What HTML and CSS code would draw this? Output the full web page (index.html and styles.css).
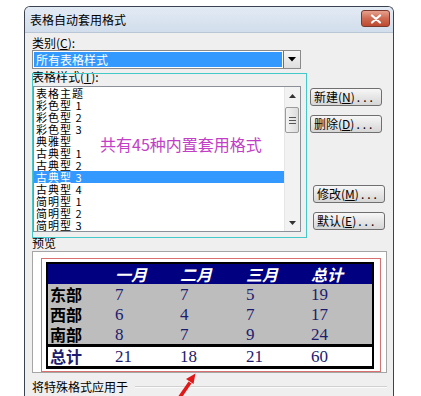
FILE: index.html
```html
<!DOCTYPE html>
<html lang="zh">
<head>
<meta charset="utf-8">
<title>表格自动套用格式</title>
<link rel="stylesheet" href="styles.css">
</head>
<body>
<div class="dialog">
  <div class="titlebar">
    <span class="title">表格自动套用格式</span>
    <span class="close"><svg width="12" height="10" viewBox="0 0 12 10"><path d="M2 1.5 L10 8.5 M10 1.5 L2 8.5" stroke="#fff" stroke-width="2.2" stroke-linecap="round"/></svg></span>
  </div>
  <div class="content">
    <div class="label">类别(<u>C</u>):</div>
    <div class="combo">
      <div class="combo-value">所有表格样式</div>
      <div class="combo-btn"><svg width="8" height="5" viewBox="0 0 8 5"><path d="M0 0 H8 L4 4.5 Z" fill="#000"/></svg></div>
    </div>
    <div class="label label-list">表格样式(<u>T</u>):</div>
    <div class="list-row">
      <div class="listbox">
        <ul class="items">
          <li>表格主题</li>
          <li>彩色型 1</li>
          <li>彩色型 2</li>
          <li>彩色型 3</li>
          <li>典雅型</li>
          <li>古典型 1</li>
          <li>古典型 2</li>
          <li class="sel">古典型 3</li>
          <li>古典型 4</li>
          <li>简明型 1</li>
          <li>简明型 2</li>
          <li>简明型 3</li>
        </ul>
        <div class="scrollbar">
          <div class="sb-arrow"><svg width="7" height="4" viewBox="0 0 7 4"><path d="M0 4 H7 L3.5 0 Z" fill="#333"/></svg></div>
          <div class="sb-thumb"><span></span><span></span><span></span></div>
          <div class="sb-track"></div>
          <div class="sb-arrow"><svg width="7" height="4" viewBox="0 0 7 4"><path d="M0 0 H7 L3.5 4 Z" fill="#333"/></svg></div>
        </div>
        <div class="note">共有45种内置套用格式</div>
      </div>
      <div class="buttons">
        <div class="btn">新建(<u>N</u>)<span class="dots">...</span></div>
        <div class="btn btn-gap">删除(<u>D</u>)<span class="dots">...</span></div>
        <div class="btn btn-low btn-push">修改(<u>M</u>)<span class="dots">...</span></div>
        <div class="btn btn-low btn-gap">默认(<u>E</u>)<span class="dots">...</span></div>
      </div>
    </div>
    <div class="label label-preview">预览</div>
    <div class="preview">
      <div class="frame">
        <table class="sample">
          <colgroup><col class="c0"><col class="c1"><col class="c2"><col class="c3"><col class="c4"></colgroup>
          <thead>
            <tr><th></th><th>一月</th><th>二月</th><th>三月</th><th>总计</th></tr>
          </thead>
          <tbody>
            <tr><td class="rl">东部</td><td>7</td><td>7</td><td>5</td><td>19</td></tr>
            <tr><td class="rl">西部</td><td>6</td><td>4</td><td>7</td><td>17</td></tr>
            <tr><td class="rl">南部</td><td>8</td><td>7</td><td>9</td><td>24</td></tr>
          </tbody>
          <tfoot>
            <tr><td class="rl">总计</td><td>21</td><td>18</td><td>21</td><td>60</td></tr>
          </tfoot>
        </table>
      </div>
    </div>
    <div class="apply"><span>将特殊格式应用于</span><span class="rule"></span></div>
  </div>
</div>
<div class="annot-box"></div>
<svg class="arrow" width="30" height="26" viewBox="0 0 30 26"><path d="M8 27 L18 12.5" stroke="#e01818" stroke-width="3.6"/><path d="M23.5 3.5 L21.5 14 L14 9 Z" fill="#e01818"/></svg>
</body>
</html>
```
FILE: styles.css
```css
* { box-sizing: border-box; }
html, body {
  margin: 0;
  padding: 0;
  width: 421px;
  height: 396px;
  overflow: hidden;
  background: #fff;
}
body {
  position: relative;
  font-family: "Noto Sans CJK SC", "Noto Sans", sans-serif;
  font-size: 12px;
  color: #000;
}
u { text-decoration: underline; text-underline-offset: 1px; }

.dialog {
  margin: 6px 0 0 24px;
  width: 370px;
  height: 400px;
  border: 1px solid #3b4350;
  border-bottom: none;
  border-radius: 6px 6px 0 0;
  background: #efefef;
}
.titlebar {
  height: 26px;
  display: flex;
  justify-content: space-between;
  align-items: center;
  padding: 0 3px 0 5px;
  background: linear-gradient(#e2eaf4, #d2deec);
  border-radius: 5px 5px 0 0;
  border-bottom: 1px solid #b9c6d6;
}
.title { line-height: 14px; }
.close {
  align-self: flex-start;
  margin-top: 3px;
  width: 29px;
  height: 17px;
  border: 1px solid #7a3a2e;
  border-radius: 3px;
  background: linear-gradient(#e6a28e, #cf6a52 50%, #bd4a33);
  display: flex;
  align-items: center;
  justify-content: center;
}
.content { padding: 2px 0 0 7px; }
.label { line-height: 15px; height: 15px; }
.label-list { height: 16px; line-height: 16px; }
.label-preview { margin-top: 3px; height: 16px; line-height: 16px; }

.combo {
  display: flex;
  width: 269px;
  height: 19px;
  border: 1px solid #8a8a8a;
  background: #fff;
}
.combo-value {
  flex: 1;
  margin: 1px;
  background: #3399ff;
  color: #fff;
  line-height: 15px;
  padding-left: 2px;
}
.combo-btn {
  width: 17px;
  border-left: 1px solid #707070;
  background: linear-gradient(#f6f6f6, #dedede);
  display: flex;
  align-items: center;
  justify-content: center;
}

.list-row { display: flex; gap: 9px; margin-top: 1px; }
.listbox {
  position: relative;
  display: flex;
  margin-left: 1px;
  width: 268px;
  height: 146px;
  border: 1px solid #8a8f98;
  background: #fff;
}
.items {
  list-style: none;
  margin: 0;
  padding: 0;
  width: 250px;
}
.items li {
  height: 12px;
  line-height: 12px;
  padding-left: 2px;
  font-size: 11px;
  letter-spacing: 1px;
  white-space: pre;
}
.items li.sel { background: #3399ff; color: #fff; }
.scrollbar {
  width: 16px;
  display: flex;
  flex-direction: column;
  background: #f2f2f2;
  border-left: 1px solid #e6e6e6;
}
.sb-arrow {
  height: 17px;
  display: flex;
  align-items: center;
  justify-content: center;
}
.sb-thumb {
  margin: 3px 1px 0 0;
  height: 26px;
  border: 1px solid #9b9b9b;
  border-radius: 2px;
  background: linear-gradient(90deg, #f3f3f3, #dcdcdc);
  display: flex;
  flex-direction: column;
  align-items: center;
  justify-content: center;
  gap: 2px;
}
.sb-thumb span { width: 7px; height: 1px; background: #555; }
.sb-track { flex: 1; }
.note {
  position: absolute;
  left: 66px;
  top: 47px;
  font-size: 16px;
  line-height: 20px;
  color: #c23ec6;
}

.buttons {
  display: flex;
  flex-direction: column;
  padding: 2px 0;
}
.btn {
  width: 72px;
  height: 18px;
  border: 1px solid #6f6f6f;
  border-radius: 3px;
  background: linear-gradient(#f7f7f7, #e6e6e6 50%, #d6d6d6);
  line-height: 16px;
  padding-left: 3px;
  white-space: nowrap;
}
.btn-gap { margin-top: 9px; }
.btn-push { margin-top: auto; }
.btn-low { margin-left: 3px; }
.dots { letter-spacing: 3px; margin-left: 2px; }

.preview {
  width: 355px;
  height: 122px;
  border: 1px solid #a5a5a5;
  background: #fff;
  padding: 6px 5px 0 8px;
}
.frame {
  height: 114px;
  border: 1px solid #d97070;
  padding: 3px 0 0 4px;
}
.sample {
  width: 328px;
  border-collapse: separate;
  border-spacing: 0;
  border: 2px solid #000;
  border-bottom-width: 3px;
  table-layout: fixed;
}
.c0 { width: 65px; }
.c1 { width: 65px; }
.c2 { width: 66px; }
.c3 { width: 65px; }
.c4 { width: 63px; }
.sample th, .sample td { padding: 0 0 0 2px; text-align: left; }
.sample thead th {
  height: 20px;
  background: #000080;
  color: #fff;
  font-size: 16px;
  font-style: italic;
  font-weight: bold;
  line-height: 20px;
}
.sample tbody td {
  height: 20px;
  background: #bdbdbd;
}
.sample td {
  font-family: "Liberation Serif", serif;
  font-size: 17px;
  line-height: 19px;
  color: #1c1c6e;
}
.sample td.rl {
  font-family: "Noto Sans CJK SC", sans-serif;
  font-size: 16px;
  font-weight: bold;
  color: #000;
}
.sample tfoot td {
  height: 19px;
  border-top: 3px solid #000;
  background: #fff;
}
.sample tfoot td.rl { color: #1c1c6e; }

.apply {
  display: flex;
  align-items: center;
  gap: 7px;
  width: 355px;
  margin-top: 6px;
  line-height: 15px;
}
.rule {
  flex: 1;
  height: 2px;
  border-top: 1px solid #d0d0d0;
  border-bottom: 1px solid #fafafa;
}

.annot-box {
  position: absolute;
  left: 32px;
  top: 73px;
  width: 275px;
  height: 165px;
  border: 1px solid #45c8c8;
}
.arrow {
  position: absolute;
  left: 172px;
  top: 370px;
}
```
